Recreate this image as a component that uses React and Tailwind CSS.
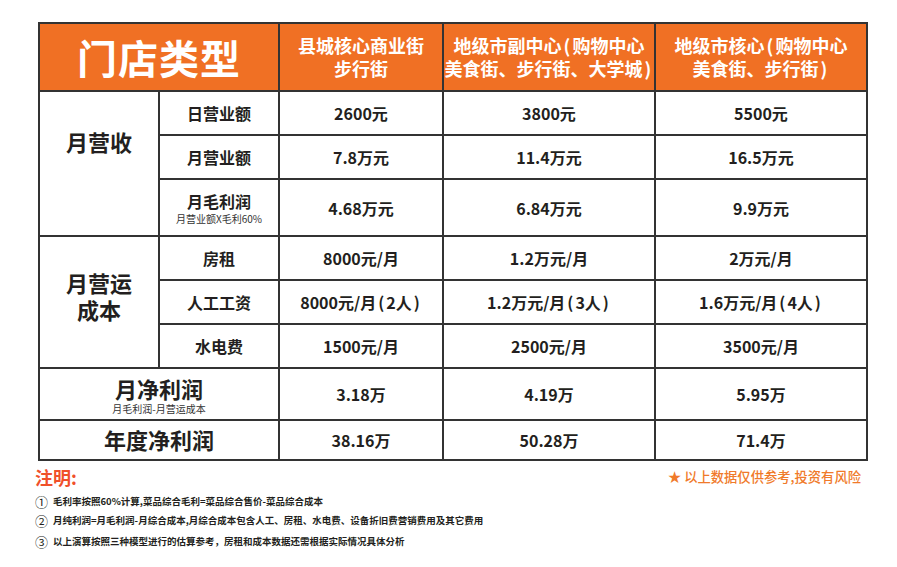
import React from "react";

const cell = "border-2 border-[#333] text-center align-middle";

function P({ children }) {
  // narrow parenthesis like the reference's condensed brackets
  return <span className="mx-[2px]">{children}</span>;
}

function Val({ children }) {
  return <td className={`${cell} text-[16px] font-bold text-[#231f20]`}>{children}</td>;
}

function Note({ n, children, className = "" }) {
  return (
    <div className={`flex items-center gap-[5px] ${className}`}>
      <span className="text-[13px] font-normal leading-none">{n}</span>
      <span>{children}</span>
    </div>
  );
}

export default function App() {
  const revenue = [
    { label: "日营业额", vals: ["2600元", "3800元", "5500元"] },
    { label: "月营业额", vals: ["7.8万元", "11.4万元", "16.5万元"] },
    { label: "月毛利润", sub: "月营业额X毛利60%", vals: ["4.68万元", "6.84万元", "9.9万元"], h: "h-[57px]" },
  ];
  const costs = [
    { label: "房租", vals: ["8000元/月", "1.2万元/月", "2万元/月"] },
    {
      label: "人工工资",
      vals: [
        <>8000元/月<P>(</P>2人<P>)</P></>,
        <>1.2万元/月<P>(</P>3人<P>)</P></>,
        <>1.6万元/月<P>(</P>4人<P>)</P></>,
      ],
    },
    { label: "水电费", vals: ["1500元/月", "2500元/月", "3500元/月"] },
  ];

  return (
    <div className="w-[897px] h-[567px] bg-white font-['Noto_Sans_CJK_SC','Noto_Sans',sans-serif] text-[#231f20] pt-[22px] pl-[38px]">
      <table className="table-fixed border-collapse border-2 border-[#333] w-[829px] leading-tight">
        <colgroup>
          <col className="w-[120px]" />
          <col className="w-[120px]" />
          <col className="w-[164px]" />
          <col className="w-[212px]" />
          <col className="w-[212px]" />
        </colgroup>
        <tbody>
          <tr className="h-[68px] bg-[#f07024] text-white">
            <td colSpan={2} className={`${cell} text-[40px] font-bold tracking-[1px]`}>门店类型</td>
            <td className={`${cell} text-[18px] font-bold leading-[23px]`}>县城核心商业街<br />步行街</td>
            <td className={`${cell} text-[18px] font-bold leading-[23px]`}>
              地级市副中心<P>(</P>购物中心<br />美食街、步行街、大学城<P>)</P>
            </td>
            <td className={`${cell} text-[18px] font-bold leading-[23px]`}>
              地级市核心<P>(</P>购物中心<br />美食街、步行街<P>)</P>
            </td>
          </tr>
          {revenue.map((r, i) => (
            <tr key={r.label} className={r.h || "h-[44px]"}>
              {i === 0 && (
                <td rowSpan={3} className={`${cell} text-[22px] font-bold pb-[44px]`}>月营收</td>
              )}
              <td className={`${cell} text-[16px] font-bold`}>
                <div className="leading-[20px]">{r.label}</div>
                {r.sub && <div className="text-[10px] font-normal text-[#333] leading-none mt-[3px]">{r.sub}</div>}
              </td>
              {r.vals.map((v, j) => <Val key={j}>{v}</Val>)}
            </tr>
          ))}
          {costs.map((r, i) => (
            <tr key={r.label} className="h-[44px]">
              {i === 0 && (
                <td rowSpan={3} className={`${cell} text-[22px] font-bold leading-[27px] pb-[12px]`}>
                  <div>月营运</div>
                  <div>成本</div>
                </td>
              )}
              <td className={`${cell} text-[16px] font-bold`}>{r.label}</td>
              {r.vals.map((v, j) => <Val key={j}>{v}</Val>)}
            </tr>
          ))}
          <tr className="h-[52px]">
            <td colSpan={2} className={`${cell} font-bold`}>
              <div className="text-[22px] leading-[26px]">月净利润</div>
              <div className="text-[10px] font-normal text-[#333] leading-none mt-[3px]">月毛利润-月营运成本</div>
            </td>
            <Val>3.18万</Val>
            <Val>4.19万</Val>
            <Val>5.95万</Val>
          </tr>
          <tr className="h-[40px]">
            <td colSpan={2} className={`${cell} text-[22px] font-bold`}>年度净利润</td>
            <Val>38.16万</Val>
            <Val>50.28万</Val>
            <Val>71.4万</Val>
          </tr>
        </tbody>
      </table>

      <div className="flex justify-between items-start w-[826px] -ml-[3px] mt-[2px]">
        <div className="text-[18px] font-bold text-[#f0502a] leading-[28px]">注明:</div>
        <div className="text-[13.3px] text-[#f07a2a] leading-[28px] font-medium">★ 以上数据仅供参考,投资有风险</div>
      </div>
      <div className="-ml-[3px] mt-[3px] flex flex-col gap-[4px] text-[9.5px] font-bold text-[#231f20] leading-[15px]">
        <Note n="①">毛利率按照60%计算,菜品综合毛利=菜品综合售价-菜品综合成本</Note>
        <Note n="②">月纯利润=月毛利润-月综合成本,月综合成本包含人工、房租、水电费、设备折旧费营销费用及其它费用</Note>
        <Note n="③" className="mt-[2px]">以上演算按照三种模型进行的估算参考，房租和成本数据还需根据实际情况具体分析</Note>
      </div>
    </div>
  );
}
